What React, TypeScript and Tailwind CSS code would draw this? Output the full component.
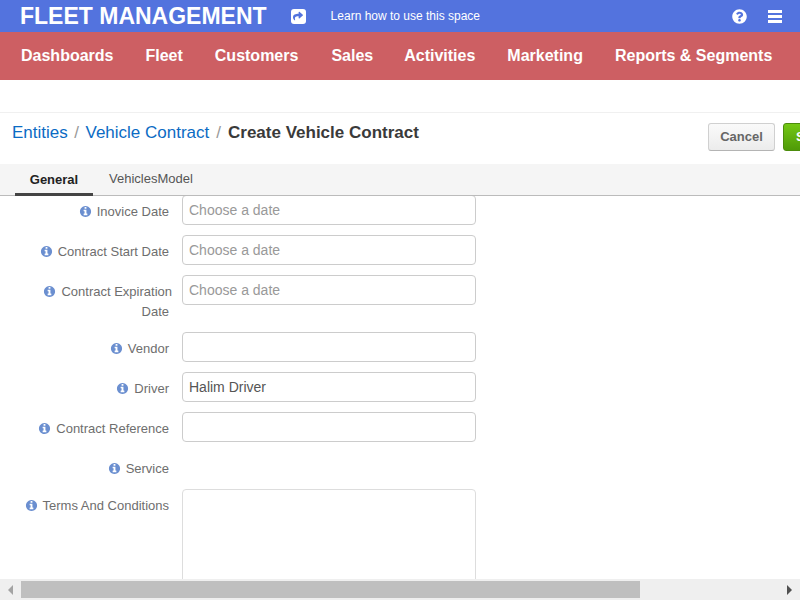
import type { ReactNode } from 'react';
import { FaQuestionCircle, FaShare } from 'react-icons/fa';

const navItems = [
  { label: 'Dashboards', className: 'ml-[21px]' },
  { label: 'Fleet', className: 'ml-[32px]' },
  { label: 'Customers', className: 'ml-[32px]' },
  { label: 'Sales', className: 'ml-[33px]' },
  { label: 'Activities', className: 'ml-[31px]' },
  { label: 'Marketing', className: 'ml-[32px]' },
  { label: 'Reports & Segments', className: 'ml-[32px]' },
];

function InfoIcon() {
  return (
    <svg viewBox="0 0 1792 1792" width="13" height="13" className="inline-block align-[-2px] mr-[5px] fill-[#6b8fd0]">
      <path d="M1152 1376v-160q0-14-9-23t-23-9h-96v-512q0-14-9-23t-23-9h-320q-14 0-23 9t-9 23v160q0 14 9 23t23 9h96v320h-96q-14 0-23 9t-9 23v160q0 14 9 23t23 9h448q14 0 23-9t9-23zm-128-896v-160q0-14-9-23t-23-9h-192q-14 0-23 9t-9 23v160q0 14 9 23t23 9h192q14 0 23-9t9-23zm640 416q0 209-103 385.5t-279.5 279.5-385.5 103-385.5-103-279.5-279.5-103-385.5 103-385.5 279.5-279.5 385.5-103 385.5 103 279.5 279.5 103 385.5z" />
    </svg>
  );
}

function FieldLabel({ children }: { children: ReactNode }) {
  return (
    <label className="w-[169px] shrink-0 pt-[7px] text-right text-[13px] leading-[20px] text-[#6e6e6e]">
      <InfoIcon />
      {children}
    </label>
  );
}

function TextField({ placeholder, value }: { placeholder?: string; value?: string }) {
  return (
    <input
      readOnly
      placeholder={placeholder}
      value={value ?? ''}
      className="ml-[13px] w-[294px] h-[30px] shrink-0 rounded-[4px] border border-[#ccc] bg-white px-[6px] text-[14px] text-[#555] placeholder:text-[#999] outline-none"
    />
  );
}

export default function App() {
  return (
    <div className="w-[800px] h-[600px] overflow-hidden flex flex-col bg-white font-['Liberation_Sans',Arial,sans-serif]">
      {/* top bar */}
      <div className="h-[32px] shrink-0 flex items-center bg-[#5373de] text-white">
        <span className="ml-[20px] text-[23px] leading-[32px] font-bold whitespace-nowrap">FLEET MANAGEMENT</span>
        <div className="ml-[24px] w-[15px] h-[15px] flex items-center justify-center rounded-[3px] bg-white text-[#5373de]">
          <FaShare size={10} />
        </div>
        <span className="ml-[25px] text-[12px] whitespace-nowrap">Learn how to use this space</span>
        <FaQuestionCircle className="ml-auto" size={15} />
        <div className="ml-[21px] mr-[18px] flex flex-col gap-[2px]">
          <div className="w-[14px] h-[3px] bg-white" />
          <div className="w-[14px] h-[3px] bg-white" />
          <div className="w-[14px] h-[3px] bg-white" />
        </div>
      </div>

      {/* main nav */}
      <div className="h-[48px] shrink-0 flex items-center bg-[#cd5f63] text-white">
        {navItems.map((item) => (
          <span key={item.label} className={`text-[16px] font-bold whitespace-nowrap ${item.className}`}>
            {item.label}
          </span>
        ))}
      </div>

      <div className="h-[33px] shrink-0 border-b border-[#f0f0f0]" />

      {/* breadcrumb and actions */}
      <div className="h-[51px] shrink-0 flex items-start overflow-hidden">
        <div className="ml-[12px] mt-[9px] flex items-center text-[17px] leading-[22px] whitespace-nowrap">
          <span className="text-[#0b6bc4]">Entities</span>
          <span className="mx-[6.5px] text-[#999]">/</span>
          <span className="text-[#0b6bc4]">Vehicle Contract</span>
          <span className="mx-[7px] text-[#999]">/</span>
          <span className="font-bold text-[#3a3a3a]">Create Vehicle Contract</span>
        </div>
        <div className="ml-auto mt-[10px] flex shrink-0 w-[92px] gap-[8px]">
          <button className="w-[67px] h-[28px] shrink-0 rounded-[3px] border border-[#d0d0d0] border-b-[#b4b4b4] bg-gradient-to-b from-[#fafafa] to-[#ececec] text-[13px] font-bold text-[#666]">
            Cancel
          </button>
          <button className="w-[60px] h-[28px] shrink-0 rounded-[3px] border border-[#4c8c0c] bg-gradient-to-b from-[#74c814] to-[#4f9a08] pl-[12px] text-left text-[13px] font-bold text-white">
            Save
          </button>
        </div>
      </div>

      {/* tabs */}
      <div className="h-[32px] shrink-0 flex items-stretch bg-[#f5f5f5] border-b border-[#bbb] text-[13px]">
        <div className="ml-[15px] w-[78px] flex items-center justify-center border-b-[3px] border-[#444] pt-[3px] font-bold text-[#222] h-[32px]">
          General
        </div>
        <div className="ml-[16px] flex items-center pb-[1px] text-[#555]">VehiclesModel</div>
      </div>

      {/* form body, scrolled a little so the first input is clipped */}
      <div className="flex-1 min-h-0 overflow-hidden">
        <div className="flex flex-col -mt-[1px]">
          <div className="flex items-start h-[40px]">
            <FieldLabel>Inovice Date</FieldLabel>
            <TextField placeholder="Choose a date" />
          </div>
          <div className="flex items-start h-[40px]">
            <FieldLabel>Contract Start Date</FieldLabel>
            <TextField placeholder="Choose a date" />
          </div>
          <div className="flex items-start h-[57px]">
            <FieldLabel>
              <span className="-mr-[3px] whitespace-nowrap">Contract Expiration</span>
              <br />
              Date
            </FieldLabel>
            <TextField placeholder="Choose a date" />
          </div>
          <div className="flex items-start h-[40px]">
            <FieldLabel>Vendor</FieldLabel>
            <TextField />
          </div>
          <div className="flex items-start h-[40px]">
            <FieldLabel>Driver</FieldLabel>
            <TextField value="Halim Driver" />
          </div>
          <div className="flex items-start h-[40px]">
            <FieldLabel>Contract Reference</FieldLabel>
            <TextField />
          </div>
          <div className="flex items-start h-[37px]">
            <FieldLabel>Service</FieldLabel>
          </div>
          <div className="flex items-start">
            <FieldLabel>Terms And Conditions</FieldLabel>
            <div className="ml-[13px] w-[294px] h-[140px] shrink-0 rounded-[4px] border border-[#ddd] bg-white" />
          </div>
        </div>
      </div>

      {/* horizontal scrollbar */}
      <div className="h-[21px] shrink-0 flex items-center bg-[#efefef]">
        <div className="w-[21px] h-full flex items-center justify-center">
          <div className="w-0 h-0 border-y-[5px] border-y-transparent border-r-[5px] border-r-[#a3a3a3]" />
        </div>
        <div className="w-[619px] h-[17px] bg-[#bfbfbf]" />
        <div className="ml-auto w-[21px] h-full flex items-center justify-center">
          <div className="w-0 h-0 border-y-[5px] border-y-transparent border-l-[5px] border-l-[#505050]" />
        </div>
      </div>
    </div>
  );
}
